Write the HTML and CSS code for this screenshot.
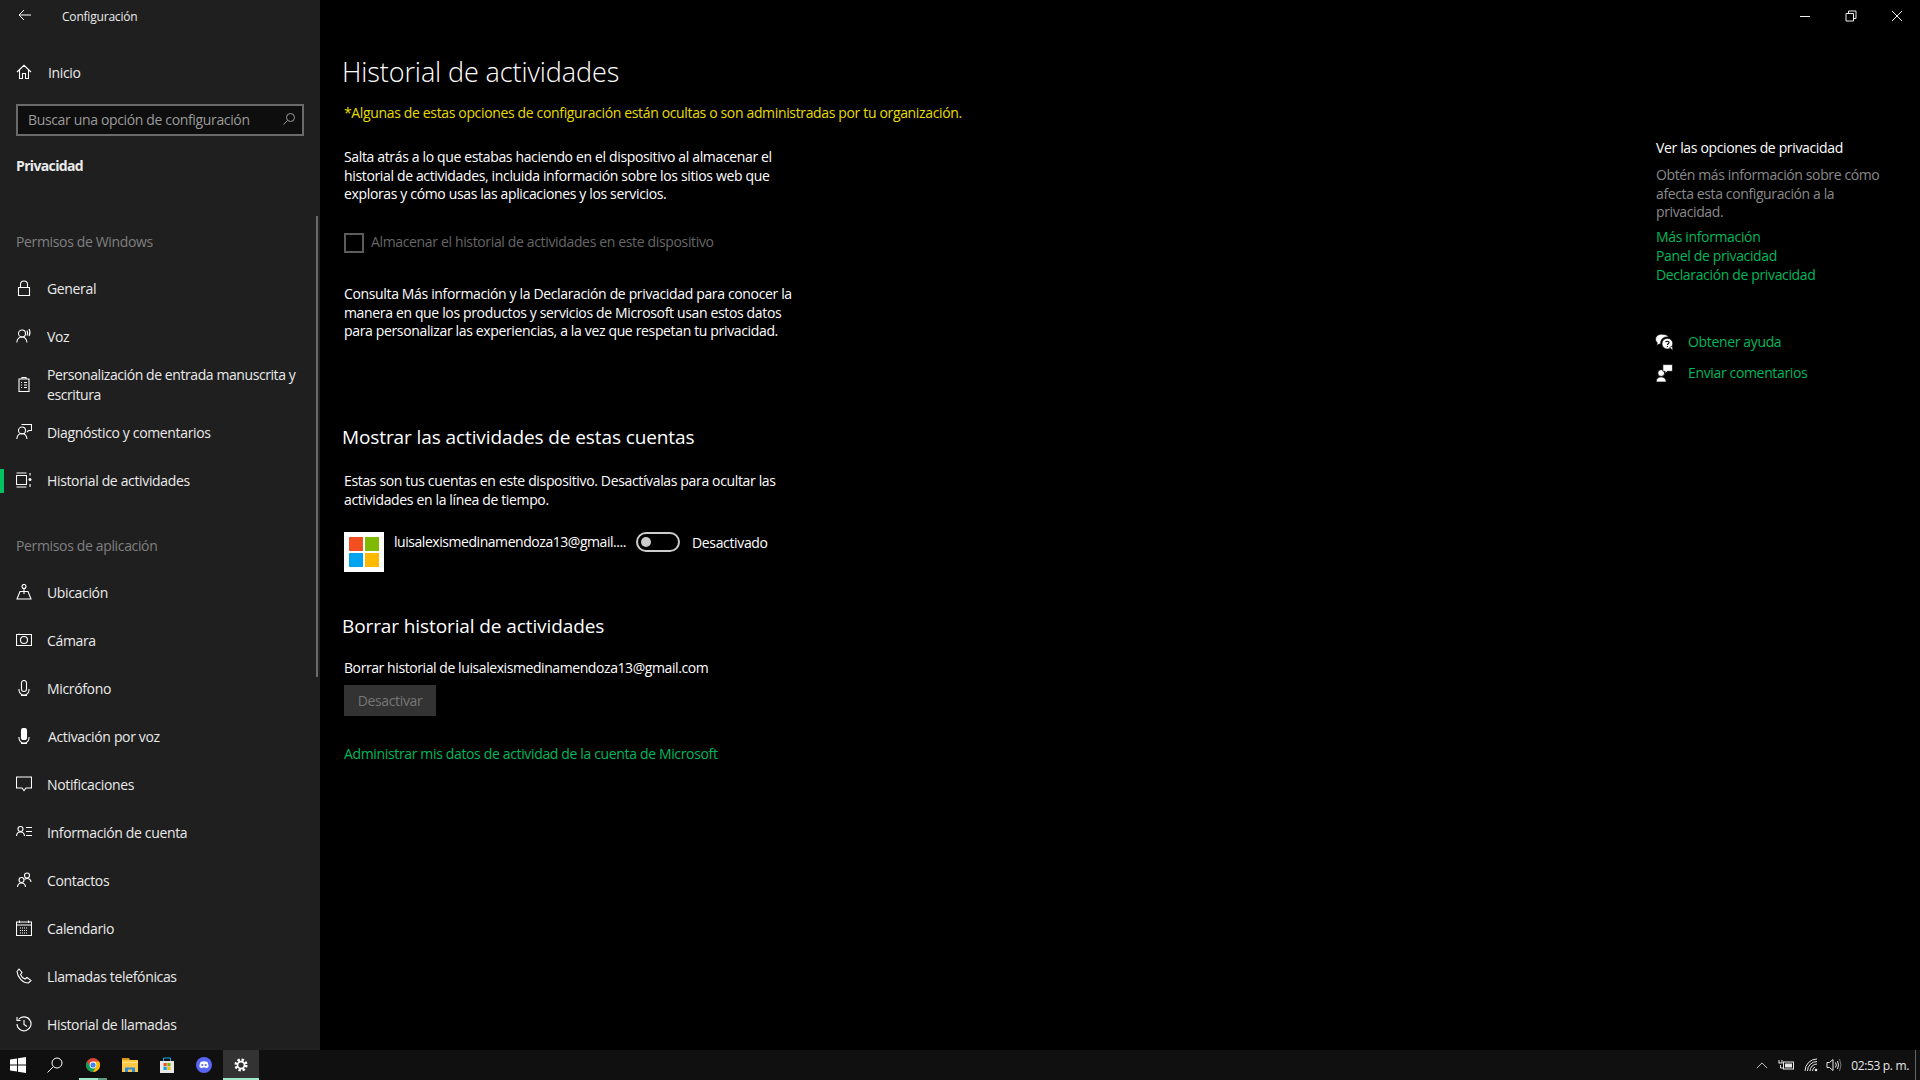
FILE: index.html
```html
<!DOCTYPE html>
<html lang="es">
<head>
<meta charset="utf-8">
<title>Configuración</title>
<link rel="stylesheet" href="styles.css">
</head>
<body>
<div class="window">
  <aside class="sidebar">
    <div class="titlebar">
      <svg class="back" viewBox="0 0 14 12"><path d="M13 6H1M6 1 1 6l5 5"/></svg>
      <span class="app-title">Configuración</span>
    </div>
    <div class="row home">
      <svg class="ico" viewBox="0 0 16 16"><path d="M1 8 8 1.300 15 8M3.500 6v8.500h3v-5h3v5h3V6"/></svg>
      <span class="nudge">Inicio</span>
    </div>
    <div class="search">
      <span>Buscar una opción de configuración</span>
      <svg class="search-ico" viewBox="0 0 14 14"><circle cx="8.500" cy="5.500" r="4"/><path d="M5.500 8.500 1.500 12.500"/></svg>
    </div>
    <div class="crumb">Privacidad</div>
    <div class="group first">Permisos de Windows</div>
    <div class="row">
      <svg class="ico" viewBox="0 0 16 16"><path d="M2.500 7.500h11v8h-11zM4.500 7.500V4.500a3.500 3.500 0 0 1 7 0v3"/></svg>
      <span>General</span>
    </div>
    <div class="row">
      <svg class="ico" viewBox="0 0 16 16"><circle cx="6" cy="5.500" r="3.500"/><path d="M.8 14.500c.3-3.500 2.300-5.500 5.200-5.500s4.500 2 5 5.500M11 2.500q1.200 2.500 0 5M13 1q2 3.500 0 7"/></svg>
      <span>Voz</span>
    </div>
    <div class="row">
      <svg class="ico" viewBox="0 0 16 16"><path d="M3 3h10v12.500H3zM6 3V1.500h4V3M5 6.500h1M8 6.500h3M5 9h1M8 9h3M5 11.500h1M8 11.500h3"/></svg>
      <span class="wrap">Personalización de entrada manuscrita y escritura</span>
    </div>
    <div class="row">
      <svg class="ico" viewBox="0 0 16 16"><circle cx="6" cy="6.500" r="3.500"/><path d="M.8 15c.3-3.500 2.300-5.500 5.200-5.500s4.500 2 5 5.500M5.500 .5h10v6h-3l-1.500 1.500"/></svg>
      <span>Diagnóstico y comentarios</span>
    </div>
    <div class="row active">
      <svg class="ico" viewBox="0 0 16 16"><path d="M.5 1h10M.5 15h10M.5 3.500h10v9H.5zM14 1v2.500M14 12v3"/><circle class="dot" cx="14" cy="7.500" r="1.500"/></svg>
      <span>Historial de actividades</span>
    </div>
    <div class="group second">Permisos de aplicación</div>
    <div class="row">
      <svg class="ico" viewBox="0 0 16 16"><circle cx="8" cy="2.500" r="2"/><path d="M8 4.500V10M4 7.500h8l3 7.500H1z"/></svg>
      <span>Ubicación</span>
    </div>
    <div class="row">
      <svg class="ico" viewBox="0 0 16 16"><path d="M.5 2.500h15v11H.5zM3 2.500v-1"/><circle cx="8" cy="8" r="3.500"/></svg>
      <span>Cámara</span>
    </div>
    <div class="row">
      <svg class="ico" viewBox="0 0 16 16"><rect x="5.500" y=".5" width="5" height="11" rx="2.500"/><path d="M3 9v1a5 5 0 0 0 10 0V9M8 14.500v1.500M5 15.500h6"/></svg>
      <span>Micrófono</span>
    </div>
    <div class="row">
      <svg class="ico" viewBox="0 0 16 16"><rect x="5.500" y=".5" width="5" height="11" rx="2" class="filled"/><path d="M3 9v1a5 5 0 0 0 10 0V9M8 14.500v1.500M5 15.500h6"/></svg>
      <span class="nudge">Activación por voz</span>
    </div>
    <div class="row">
      <svg class="ico" viewBox="0 0 16 16"><path d="M.5 1h15v11H10l-2 2.500L6 12H.5z"/></svg>
      <span>Notificaciones</span>
    </div>
    <div class="row">
      <svg class="ico" viewBox="0 0 16 16"><circle cx="4.500" cy="5" r="2.500"/><path d="M.5 12c.2-2.500 1.800-4 4-4s3.800 1.500 4 4M10 3.500h6M10 7.500h6M10 11.500h6"/></svg>
      <span>Información de cuenta</span>
    </div>
    <div class="row">
      <svg class="ico" viewBox="0 0 16 16"><circle cx="5.500" cy="8" r="2.500"/><circle cx="11" cy="3.500" r="2.500"/><path d="M1.500 15c.2-2.500 1.800-4 4-4s3.800 1.500 4 4M8.500 7.500c1-1 1.500-1 2.500-1 2.200 0 3.800 1.500 4 3.500"/></svg>
      <span>Contactos</span>
    </div>
    <div class="row">
      <svg class="ico" viewBox="0 0 16 16"><path d="M.5 2h15v13.500H.5zM.5 5h15M3.500 .5V3M12.500 .5V3"/><path class="dots" d="M4 8h8M4 10.500h8M4 13h8"/></svg>
      <span>Calendario</span>
    </div>
    <div class="row">
      <svg class="ico" viewBox="0 0 16 16"><path d="M1 3.500 3 1l3 3.500-1.500 2c.8 2 2.500 3.700 4.500 4.500l2-1.500 4 3-2.500 2.500C6.500 15 1.500 9 1 3.500z"/></svg>
      <span>Llamadas telefónicas</span>
    </div>
    <div class="row">
      <svg class="ico" viewBox="0 0 16 16"><path d="M2.500 3.500A7 7 0 1 1 1 8M1 1v3.500h3.500M8 4v4.500l3 2"/></svg>
      <span>Historial de llamadas</span>
    </div>
    <div class="scrollbar"></div>
  </aside>

  <main class="main">
    <div class="winbar">
      <svg class="win-ico" viewBox="0 0 12 12"><path d="M1 6.500h10"/></svg>
      <svg class="win-ico" viewBox="0 0 12 12"><path d="M1 3.500h7.500V11H1zM3.500 3.500V1H11v7.500H8.500"/></svg>
      <svg class="win-ico" viewBox="0 0 12 12"><path d="M1 1l10 10M11 1 1 11"/></svg>
    </div>
    <div class="panes">
      <section class="content">
        <h1>Historial de actividades</h1>
        <p class="notice">*Algunas de estas opciones de configuración están ocultas o son administradas por tu organización.</p>
        <p class="para intro">Salta atrás a lo que estabas haciendo en el dispositivo al almacenar el historial de actividades, incluida información sobre los sitios web que exploras y cómo usas las aplicaciones y los servicios.</p>
        <div class="check"><span class="box"></span><span class="check-label">Almacenar el historial de actividades en este dispositivo</span></div>
        <p class="para consult">Consulta Más información y la Declaración de privacidad para conocer la manera en que los productos y servicios de Microsoft usan estos datos para personalizar las experiencias, a la vez que respetan tu privacidad.</p>
        <h2 class="show">Mostrar las actividades de estas cuentas</h2>
        <p class="para accounts">Estas son tus cuentas en este dispositivo. Desactívalas para ocultar las actividades en la línea de tiempo.</p>
        <div class="account">
          <span class="avatar"><svg viewBox="0 0 40 40" class="ms"><rect class="ms-r" x="5" y="5" width="14" height="14"/><rect class="ms-g" x="21" y="5" width="14" height="14"/><rect class="ms-b" x="5" y="21" width="14" height="14"/><rect class="ms-y" x="21" y="21" width="14" height="14"/></svg></span>
          <span class="email">luisalexismedinamendoza13@gmail....</span>
          <span class="toggle"><span class="knob"></span></span>
          <span class="state">Desactivado</span>
        </div>
        <h2 class="clear">Borrar historial de actividades</h2>
        <p class="clear-line">Borrar historial de luisalexismedinamendoza13@gmail.com</p>
        <div class="button">Desactivar</div>
        <a class="link manage">Administrar mis datos de actividad de la cuenta de Microsoft</a>
      </section>
      <aside class="rail">
        <div class="rail-head">Ver las opciones de privacidad</div>
        <p class="rail-text">Obtén más información sobre cómo afecta esta configuración a la privacidad.</p>
        <div class="rail-links">
          <a class="link">Más información</a>
          <a class="link">Panel de privacidad</a>
          <a class="link">Declaración de privacidad</a>
        </div>
        <div class="help">
          <div class="help-row">
            <svg class="help-ico" viewBox="0 0 16 16"><path class="solid" d="M6 1C2.700 1 .5 3 .5 5.500c0 1.300.6 2.400 1.500 3.200L1.500 11l2.500-1.200h1A5.500 5.500 0 0 1 11 3.500c.5 0 1 0 1.300.2C11.500 2 9 1 6 1z"/><circle class="solid" cx="11" cy="9.500" r="4.800"/><path class="solid" d="M13 13l3 2.500-.6-4z"/><path class="qm" d="M9.500 8.200c.2-1.200 3-1.200 3 .3 0 1-1.500 1-1.500 2.200M11 11.500v1"/></svg>
            <a class="link">Obtener ayuda</a>
          </div>
          <div class="help-row">
            <svg class="help-ico" viewBox="0 0 16 16"><circle class="solid" cx="5.500" cy="8" r="3"/><path class="solid" d="M1 16c0-3 2-4.500 4.500-4.500S10 13 10 16zM7 .5h8.500v6H11l-2 2V6.500H7z"/></svg>
            <a class="link">Enviar comentarios</a>
          </div>
        </div>
      </aside>
    </div>
  </main>
</div>

<footer class="taskbar">
  <div class="tb-left">
    <span class="tb-item start"><svg viewBox="0 0 16 16" class="tb-ico"><path class="logo" d="M0 2.500 7 1.400V7.500H0zM8 1.300 16 0V7.500H8zM0 8.500h7v6.100L0 13.500zM8 8.500h8V16l-8-1.300z"/></svg></span>
    <span class="tb-item find"><svg viewBox="0 0 16 16" class="tb-ico"><circle class="lens" cx="10" cy="6" r="5"/><path class="lens" d="M6.300 9.700.5 15.500"/></svg></span>
    <span class="tb-item chrome running">
      <svg viewBox="0 0 16 16" class="tb-ico"><circle cx="8" cy="8" r="7" fill="#db4437"/><path d="M1.900 4.500A7 7 0 0 0 8 15l3.500-6H5z" fill="#0f9d58"/><path d="M8 4.500h6.100A7 7 0 0 1 8 15l3.500-6z" fill="#fbbc05"/><circle cx="8" cy="8" r="3.400" fill="#fff"/><circle cx="8" cy="8" r="2.600" fill="#4285f4"/></svg>
    </span>
    <span class="tb-item files"><svg viewBox="0 0 16 16" class="tb-ico"><path d="M0 1h7l1 2H0z" fill="#d99a12"/><path d="M0 3h16v12H0z" fill="#fcc846"/><path d="M0 5h16v1H0z" fill="#ffe08a"/><path d="M3 15v-4.500h10V15h-3v-2.500H6V15z" fill="#2d8ad8"/></svg></span>
    <span class="tb-item store"><svg viewBox="0 0 16 16" class="tb-ico"><path d="M1 4h14v11.500a.5.5 0 0 1-.5.5h-13a.5.5 0 0 1-.5-.5z" fill="#e8e8e8"/><path class="handle" d="M4.500 4V1h7v3"/><rect x="4.500" y="6" width="3.200" height="3.200" fill="#f25022"/><rect x="8.300" y="6" width="3.200" height="3.200" fill="#7fba00"/><rect x="4.500" y="9.800" width="3.200" height="3.200" fill="#00a4ef"/><rect x="8.300" y="9.800" width="3.200" height="3.200" fill="#ffb900"/></svg></span>
    <span class="tb-item discord"><svg viewBox="0 0 16 16" class="tb-ico"><circle cx="8" cy="8" r="8" fill="#5865f2"/><path d="M4.800 4.800c2-.8 4.400-.8 6.400 0 1 1.600 1.400 3.300 1.300 5.300-.9.700-1.700 1-2.500 1.200l-.6-.9H6.600l-.6.900c-.8-.2-1.600-.5-2.500-1.200-.1-2 .3-3.700 1.300-5.300z" fill="#fff"/><circle cx="6.300" cy="8" r="1.100" fill="#5865f2"/><circle cx="9.700" cy="8" r="1.100" fill="#5865f2"/></svg></span>
    <span class="tb-item current"><svg viewBox="0 0 16 16" class="tb-ico gear"><circle class="gear-teeth" cx="8" cy="8" r="6"/><circle class="gear-ring" cx="8" cy="8" r="4"/></svg></span>
  </div>
  <div class="tray">
    <svg class="tray-ico chev" viewBox="0 0 14 8"><path d="M1 7l6-6 6 6"/></svg>
    <svg class="tray-ico batt" viewBox="0 0 16 12"><path d="M1 1v3M4 1v3M.5 4h4M2.500 6v3h3"/><rect x="5.500" y="3" width="10" height="7"/><rect class="batt-fill" x="7" y="4.500" width="7" height="4"/></svg>
    <svg class="tray-ico wifi" viewBox="0 0 14 14"><path d="M1 13A12 12 0 0 1 13 1M3.500 13A9.500 9.500 0 0 1 13 3.500M6 13a7 7 0 0 1 7-7M8.500 13A4.500 4.500 0 0 1 11 9"/><circle class="dot" cx="12" cy="12" r="1.300"/></svg>
    <svg class="tray-ico vol" viewBox="0 0 16 14"><path d="M1 4.500h2.500L7 1.500v11l-3.500-3H1zM9.500 4.500q1.500 2.500 0 5M11.500 3q2 4 0 8"/><path class="dim" d="M13.500 1q3 6 0 12"/></svg>
    <span class="clock">02:53 p. m.</span>
    <span class="desk"></span>
  </div>
</footer>
</body>
</html>
```

FILE: styles.css
```css
* { box-sizing: border-box; }
html, body { margin: 0; padding: 0; height: 100%; }
body {
  width: 1920px;
  height: 1080px;
  overflow: hidden;
  background: #000;
  color: #fff;
  font-family: "Open Sans", "Noto Sans", sans-serif;
  font-size: 14px;
  letter-spacing: -0.35px;
  display: flex;
  flex-direction: column;
}
p, h1, h2 { margin: 0; font-weight: 400; }

.window { display: flex; height: 1050px; }

/* sidebar */
.sidebar {
  position: relative;
  width: 320px;
  flex: none;
  background: #1f1f1f;
  overflow: hidden;
  color: #eaeaea;
}
.titlebar { height: 32px; display: flex; align-items: center; padding-left: 18px; }
.back { width: 14px; height: 12px; fill: none; stroke: #fff; stroke-width: 1; margin-top: -2px; }
.app-title { margin-left: 30px; font-size: 12px; letter-spacing: -0.2px; }

.row { height: 48px; display: flex; align-items: center; padding: 0 0 2px 16px; gap: 15px; }
.row.home { margin-top: 17px; }
.row.active { position: relative; }
.row.active::before {
  content: "";
  position: absolute;
  left: 0;
  top: 12px;
  width: 4px;
  height: 24px;
  background: #00c060;
}
.ico { width: 16px; height: 16px; flex: none; fill: none; stroke: #fff; stroke-width: 1.1; }
.ico .dot { fill: #fff; stroke: none; }
.ico .filled { fill: #fff; }
.ico .dots { stroke-width: 1; stroke-dasharray: 1 1; }
.wrap { width: 262px; line-height: 20px; margin-top: 2px; letter-spacing: -0.42px; }
.nudge { margin-left: 1px; }

.search {
  margin: 7px 0 0 16px;
  width: 288px;
  height: 32px;
  border: 2px solid #6a6a6a;
  background: #0e0e0e;
  color: #9a9a9a;
  display: flex;
  align-items: center;
  justify-content: space-between;
  padding: 0 6px 2px 10px;
}
.search-ico { width: 14px; height: 14px; fill: none; stroke: #9a9a9a; stroke-width: 1; }
.crumb { margin: 20px 0 0 16px; height: 20px; line-height: 20px; font-weight: 700; letter-spacing: -0.65px; }
.group { margin-left: 16px; height: 20px; line-height: 20px; color: #808080; }
.group.first { margin-top: 56px; margin-bottom: 13px; }
.group.second { margin-top: 31px; margin-bottom: 13px; }
.scrollbar {
  position: absolute;
  left: 316px;
  top: 216px;
  width: 2px;
  height: 461px;
  background: #6a6a6a;
}

/* main */
.main { flex: 1; display: flex; flex-direction: column; min-width: 0; }
.winbar { height: 32px; display: flex; justify-content: flex-end; align-items: center; gap: 34px; padding-right: 17px; }
.win-ico { width: 12px; height: 12px; fill: none; stroke: #eee; stroke-width: 1; }
.panes { flex: 1; display: flex; }
.content { flex: 1; padding-left: 24px; }
h1 { font-size: 27px; font-weight: 300; line-height: 40px; margin: 20px 0 1px -2px; letter-spacing: -0.1px; }
.notice { margin-top: 11px; line-height: 19px; color: #e8dc00; }
.para { width: 456px; line-height: 18.67px; }
.intro { margin-top: 26px; }
.check { margin-top: 29px; height: 20px; display: flex; align-items: center; gap: 7px; color: #666; }
.check-label { margin-top: -3px; }
.box { width: 20px; height: 20px; border: 2px solid #5c5c5c; flex: none; }
.consult { margin-top: 32px; }
h2 { font-size: 19px; line-height: 28px; margin-left: -2px; letter-spacing: -0.1px; }
h2.show { margin-top: 82px; }
.accounts { margin-top: 21px; line-height: 18.5px; }
.account { margin-top: 23px; display: flex; align-items: flex-start; height: 40px; }
.avatar { width: 40px; height: 40px; background: #fff; flex: none; }
.ms { display: block; width: 40px; height: 40px; }
.ms-r { fill: #f25022; }
.ms-g { fill: #7fba00; }
.ms-b { fill: #00a4ef; }
.ms-y { fill: #ffb900; }
.email { margin-left: 10px; width: 242px; line-height: 20px; flex: none; white-space: nowrap; letter-spacing: -0.45px; }
.toggle {
  width: 44px;
  height: 20px;
  border: 2px solid #ccc;
  border-radius: 10px;
  flex: none;
  display: flex;
  align-items: center;
  padding-left: 3px;
}
.knob { width: 10px; height: 10px; border-radius: 50%; background: #ccc; }
.state { margin-left: 12px; line-height: 22px; }
h2.clear { margin-top: 40px; }
.clear-line { margin-top: 19px; line-height: 18px; letter-spacing: -0.42px; }
.button {
  margin-top: 8px;
  width: 92px;
  height: 31px;
  background: #333;
  color: #767676;
  display: flex;
  align-items: center;
  justify-content: center;
}
.link { color: #00b75c; }
.manage { display: block; margin-top: 29px; line-height: 18px; }

/* right rail */
.rail { width: 264px; flex: none; padding-top: 106px; }
.rail-head { height: 20px; line-height: 20px; }
.rail-text { margin-top: 8px; width: 232px; line-height: 18.67px; color: #8a8a8a; letter-spacing: -0.38px; }
.rail-links { margin-top: 5px; display: flex; flex-direction: column; line-height: 19px; }
.help { margin-top: 42px; }
.help-row { height: 31px; display: flex; align-items: center; gap: 15px; }
.help-ico { width: 18px; height: 18px; flex: none; margin-left: -1px; }
.help-ico .solid { fill: #fff; stroke: #000; stroke-width: .6; }
.help-ico .qm { fill: none; stroke: #000; stroke-width: 1; }

/* taskbar */
.taskbar {
  height: 30px;
  background: #101010;
  display: flex;
  justify-content: space-between;
  align-items: stretch;
}
.tb-left { display: flex; }
.tb-item { width: 37px; position: relative; display: flex; align-items: center; justify-content: center; }
.tb-item.start { width: 36px; }
.tb-item.find { width: 38px; }
.tb-item.current { width: 36px; margin-left: 1px; background: #333; }
.tb-item.running::after, .tb-item.current::after {
  content: "";
  position: absolute;
  left: 5px;
  right: 4px;
  bottom: 0;
  height: 2px;
  background: linear-gradient(to right, #9fe8c8 68%, #5f9a82 68%);
}
.tb-item.current::after { left: 0; right: 0; background: #9fe8c8; }
.tb-ico { width: 16px; height: 16px; }
.tb-ico.gear { width: 14px; height: 14px; }
.logo { fill: #fff; }
.lens { fill: none; stroke: #fff; stroke-width: 1; }
.handle { fill: none; stroke: #18a8e8; stroke-width: 1; }
.gear-teeth { fill: none; stroke: #fff; stroke-width: 3; stroke-dasharray: 2.700 2; }
.gear-ring { fill: none; stroke: #fff; stroke-width: 2; }
.tray { display: flex; align-items: center; }
.tray-ico { fill: none; stroke: #e6e6e6; stroke-width: 1; flex: none; }
.chev { width: 12px; height: 7px; margin-right: 10px; }
.batt { width: 16px; height: 12px; margin-right: 10px; }
.batt .batt-fill { fill: #e6e6e6; stroke: none; }
.wifi { width: 14px; height: 14px; margin-right: 8px; }
.wifi .dot { fill: #e6e6e6; stroke: none; }
.vol { width: 16px; height: 14px; margin-right: 9px; }
.vol .dim { stroke: #777; }
.clock { font-size: 12px; color: #e6e6e6; letter-spacing: -0.35px; }
.desk { width: 1px; height: 30px; margin-left: 6px; margin-right: 4px; background: #666; }
```
